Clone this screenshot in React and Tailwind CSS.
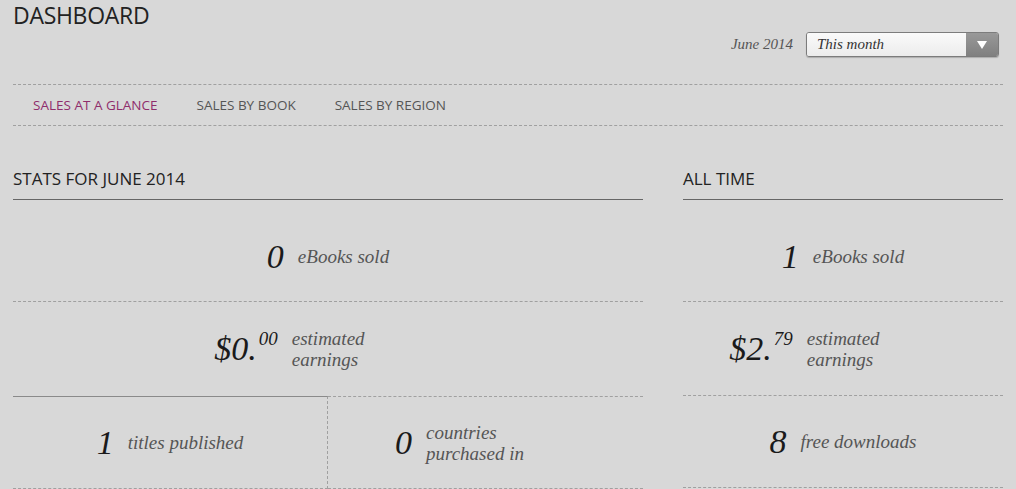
const Stat = ({ value, cents, label, wide }) => (
  <div className="flex items-center justify-center h-full gap-[14px]">
    <span className="italic text-[34px] leading-none text-[#1a1a1a] font-['Liberation_Serif',serif] whitespace-nowrap">
      {value}
      {cents && <span className="text-[19px] align-top relative -top-[3px] ml-[2px]">{cents}</span>}
    </span>
    <span
      className={`italic text-[19px] leading-[21px] text-[#555] font-['Liberation_Serif',serif] ${
        wide ? "w-[150px]" : "whitespace-nowrap"
      }`}
    >
      {label}
    </span>
  </div>
);

export default function App() {
  return (
    <div className="w-[1016px] h-[489px] overflow-hidden bg-[#d8d8d8] font-['Open_Sans',sans-serif] text-[#222]">
      <div className="px-[13px]">
        <div className="flex justify-between">
          <h1 className="text-[23px] leading-[26px] pt-[2px] tracking-[-0.3px]">DASHBOARD</h1>
          <div className="flex items-center gap-[13px] mt-[32px] mr-[4px]">
            <span className="italic text-[15px] text-[#555] font-['Liberation_Serif',serif]">June 2014</span>
            <div className="flex w-[193px] h-[25px] rounded-[3px] border border-[#7c7c7c] overflow-hidden shadow-[0_1px_1px_rgba(0,0,0,0.2)]">
              <div className="flex-1 bg-gradient-to-b from-[#fafafa] to-[#ececec] italic text-[15px] leading-[23px] pl-[10px] text-[#333] font-['Liberation_Serif',serif]">
                This month
              </div>
              <div className="w-[32px] bg-gradient-to-b from-[#999] to-[#808080] flex items-center justify-center">
                <svg width="10" height="8" viewBox="0 0 10 8">
                  <path d="M0 0 L10 0 L5 8 Z" fill="#fff" />
                </svg>
              </div>
            </div>
          </div>
        </div>

        <div className="mt-[27px] w-[990px] border-t border-dashed border-[#a0a0a0]" />
        <div className="flex h-[40px] items-center pl-[20px] gap-[39px] text-[13.5px] text-[#555]">
          <span className="text-[#8f2d6c]">SALES AT A GLANCE</span>
          <span>SALES BY BOOK</span>
          <span>SALES BY REGION</span>
        </div>
        <div className="w-[990px] border-t border-dashed border-[#a0a0a0]" />

        <div className="flex gap-[40px] mt-[41px]">
          <div className="w-[630px]">
            <div className="h-[33px] border-b border-[#666] text-[17px] leading-[24px]">STATS FOR JUNE 2014</div>
            <div className="h-[102px] pt-[12px] border-b border-dashed border-[#a0a0a0]">
              <Stat value="0" label="eBooks sold" />
            </div>
            <div className="h-[94px]">
              <Stat value="$0." cents="00" wide label={<>estimated<br />earnings</>} />
            </div>
            <div className="flex h-[93px]">
              <div
                className="w-[315px] border-t border-[#8a8a8a] border-b border-b-[#a0a0a0] border-r border-r-[#a0a0a0]"
                style={{ borderBottomStyle: "dashed", borderRightStyle: "dashed" }}
              >
                <Stat value="1" label="titles published" />
              </div>
              <div className="flex-1 border-y border-dashed border-[#a0a0a0]">
                <Stat value="0" wide label={<>countries<br />purchased in</>} />
              </div>
            </div>
          </div>
          <div className="w-[320px]">
            <div className="h-[33px] border-b border-[#666] text-[17px] leading-[24px]">ALL TIME</div>
            <div className="h-[102px] pt-[12px] border-b border-dashed border-[#a0a0a0]">
              <Stat value="1" label="eBooks sold" />
            </div>
            <div className="h-[94px] border-b border-dashed border-[#a0a0a0]">
              <Stat value="$2." cents="79" wide label={<>estimated<br />earnings</>} />
            </div>
            <div className="h-[92px] border-b border-dashed border-[#a0a0a0]">
              <Stat value="8" label="free downloads" />
            </div>
          </div>
        </div>
      </div>
    </div>
  );
}
